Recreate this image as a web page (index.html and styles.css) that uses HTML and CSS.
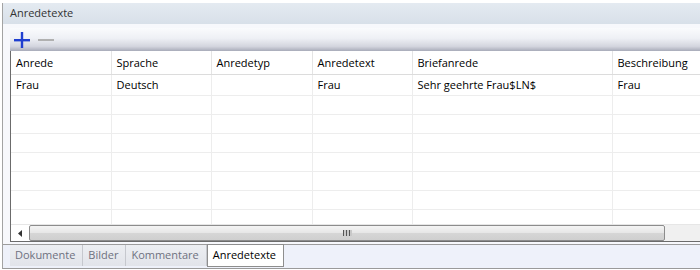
FILE: index.html
```html
<!DOCTYPE html>
<html>

<head>
    <title>Anredetexte</title>
    <link rel="stylesheet" href="styles.css">
</head>

<body>
    <div class="panel">
        <div class="panelTitle">Anredetexte</div>
        <div class="panelContent">
            <div class="toolbar">
                <svg class="toolIcon" width="16" height="16" viewBox="0 0 16 16">
                    <rect x="0" y="7" width="16" height="2.4" fill="#1f3fd0" />
                    <rect x="6.8" y="0" width="2.4" height="16" fill="#1f3fd0" />
                </svg>
                <svg class="toolIcon" width="16" height="16" viewBox="0 0 16 16">
                    <rect x="0" y="7" width="16" height="2" fill="#b0b0b0" />
                </svg>
            </div>
            <div class="grid">
                <div class="gridBody">
                    <table class="gridTable" cellpadding="0" cellspacing="0">
                        <colgroup>
                            <col style="width:100px">
                            <col style="width:100px">
                            <col style="width:101px">
                            <col style="width:100px">
                            <col style="width:200px">
                            <col style="width:150px">
                        </colgroup>
                        <tr class="headerRow">
                            <td>Anrede</td>
                            <td>Sprache</td>
                            <td>Anredetyp</td>
                            <td>Anredetext</td>
                            <td>Briefanrede</td>
                            <td>Beschreibung</td>
                        </tr>
                        <tr class="firstRow">
                            <td>Frau</td>
                            <td>Deutsch</td>
                            <td></td>
                            <td>Frau</td>
                            <td>Sehr geehrte Frau$LN$</td>
                            <td>Frau</td>
                        </tr>
                        <tr><td></td><td></td><td></td><td></td><td></td><td></td></tr>
                        <tr><td></td><td></td><td></td><td></td><td></td><td></td></tr>
                        <tr><td></td><td></td><td></td><td></td><td></td><td></td></tr>
                        <tr><td></td><td></td><td></td><td></td><td></td><td></td></tr>
                        <tr><td></td><td></td><td></td><td></td><td></td><td></td></tr>
                        <tr><td></td><td></td><td></td><td></td><td></td><td></td></tr>
                        <tr><td></td><td></td><td></td><td></td><td></td><td></td></tr>
                    </table>
                </div>
                <div class="hScroll">
                    <div class="scrollArrow">
                        <svg width="4" height="7" viewBox="0 0 4 7">
                            <polygon points="4,0 4,7 0,3.5" fill="#333" />
                        </svg>
                    </div>
                    <div class="scrollThumb">
                        <span class="grip"></span>
                    </div>
                    <div class="scrollRest"></div>
                </div>
            </div>
            <div class="tabStrip">
                <span class="tab">Dokumente</span>
                <span class="tab">Bilder</span>
                <span class="tab">Kommentare</span>
                <span class="tab tabActive">Anredetexte</span>
            </div>
        </div>
    </div>
</body>

</html>
```

FILE: styles.css
```css
body {
    margin: 0px;
    padding: 0px;
    width: 700px;
    height: 270px;
    overflow: hidden;
    background-color: white;
    font-family: "Segoe UI", "Open Sans", "Liberation Sans", sans-serif;
    font-size: 11px;
    color: black;
}

.panel {
    margin: 3px 0px 0px 2px;
    height: 265px;
    border-left: 1px solid #a3a3a3;
    border-bottom: 1px solid #9a9a9a;
    display: flex;
    flex-direction: column;
}

.panelTitle {
    height: 21px;
    line-height: 20px;
    padding-left: 7px;
    color: #333333;
    background: linear-gradient(#e4eaf1, #d8e0e9);
}

.panelContent {
    flex: 1;
    display: flex;
    flex-direction: column;
    padding: 4px 0px 0px 7px;
    background-color: #f7f8fc;
}

.toolbar {
    height: 23px;
    box-sizing: border-box;
    display: flex;
    align-items: center;
    gap: 8px;
    padding-left: 4px;
    background: linear-gradient(#fafbfd, #eef0f5 45%, #d3d5de 80%, #a8abb9);
}

.toolIcon {
    display: block;
    margin-top: 1px;
}

.grid {
    height: 191px;
    box-sizing: border-box;
    border-left: 1px solid #6b6b6b;
    border-bottom: 1px solid #6b6b6b;
    background-color: white;
    display: flex;
    flex-direction: column;
}

.gridBody {
    height: 173px;
    overflow: hidden;
}

.gridTable {
    table-layout: fixed;
    border-collapse: collapse;
    width: 751px;
    font-family: "Segoe UI", "Open Sans", "Liberation Sans", sans-serif;
    font-size: 11px;
}

.gridTable td {
    height: 18px;
    padding: 0px 0px 0px 5px;
    border-right: 1px solid #ededed;
    border-bottom: 1px solid #ededed;
    white-space: nowrap;
    overflow: hidden;
    box-sizing: border-box;
    vertical-align: middle;
}

.headerRow td {
    height: 23px;
    border-right: 1px solid #e4e4e4;
    border-bottom: 1px solid #dcdcdc;
}

.firstRow td {
    height: 21px;
}

.gridTable tr:not(.headerRow):not(.firstRow) td {
    height: 19px;
}

.hScroll {
    height: 17px;
    box-sizing: border-box;
    display: flex;
    border-top: 1px solid #e6e6e6;
}

.scrollArrow {
    width: 18px;
    display: flex;
    align-items: center;
    justify-content: center;
}

.scrollThumb {
    width: 636px;
    border: 1px solid #8c8c8c;
    border-radius: 2px;
    box-sizing: border-box;
    background: linear-gradient(#f4f4f4, #e6e6e6 50%, #d6d6d6 51%, #cfcfcf);
    display: flex;
    align-items: center;
}

.grip {
    display: block;
    margin-left: 313px;
    width: 9px;
    height: 6px;
    background: repeating-linear-gradient(90deg, #555 0px, #555 1px, #c8c8c8 1px, #c8c8c8 3px);
}

.scrollRest {
    flex: 1;
    background-color: #f0f0f0;
}

.tabStrip {
    flex: 1;
    margin-top: 2px;
    margin-left: -7px;
    padding-left: 7px;
    border-top: 1px solid #9c9c9c;
    background-color: #eef1fa;
    display: flex;
    align-items: flex-start;
}

.tab {
    height: 21px;
    line-height: 20px;
    padding: 0px 7px 0px 5px;
    color: #6e7180;
    background: linear-gradient(#eceef2, #e2e4ea);
    border-right: 1px solid #c6c8ce;
}

.tabActive {
    margin-top: -1px;
    height: 21px;
    padding: 0px 7px 0px 5px;
    color: black;
    background: white;
    border: 1px solid #8e8e8e;
}
```
